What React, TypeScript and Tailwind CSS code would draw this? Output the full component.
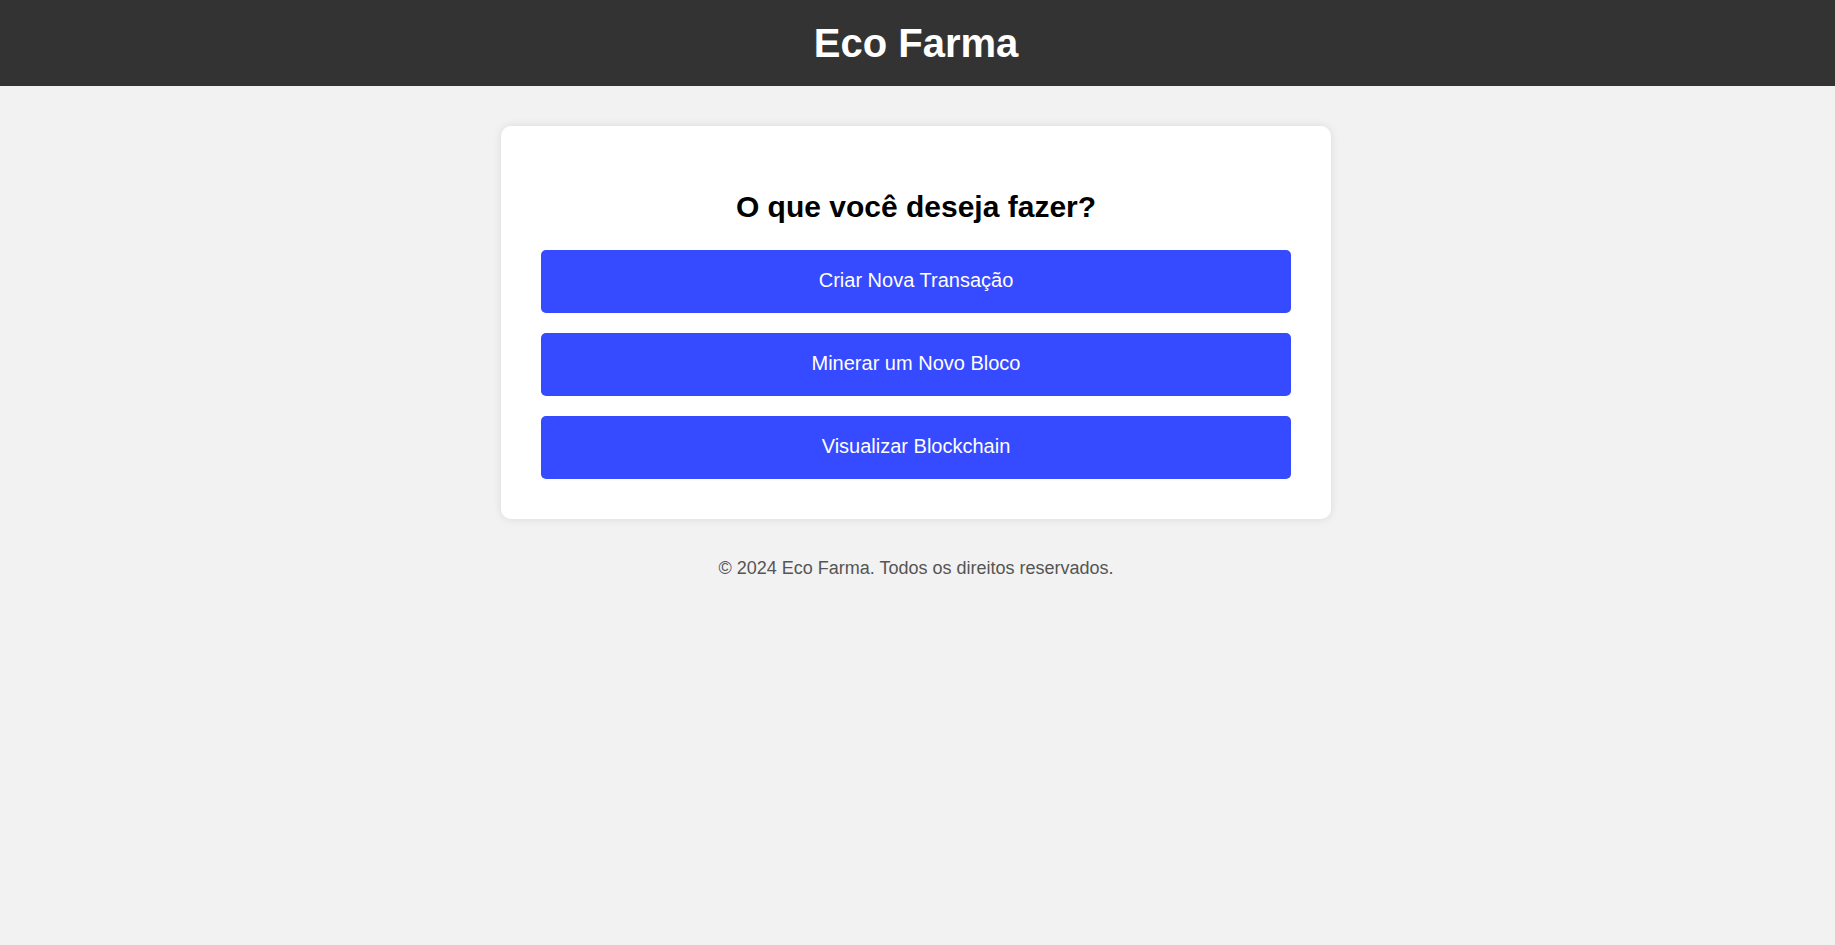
export default function App() {
  const buttons = ["Criar Nova Transação", "Minerar um Novo Bloco", "Visualizar Blockchain"];
  return (
    <div className="min-h-[945px] bg-[#f2f2f2] font-['Liberation_Sans',Arial,sans-serif]">
      <header className="bg-[#333333] py-[20px] pr-[3px] text-center">
        <h1 className="m-0 text-[40px] font-bold leading-[46px] text-white">Eco Farma</h1>
      </header>
      <div className="pr-[3px]">
        <main className="mx-auto mt-[40px] w-[830px] rounded-[10px] bg-white p-[40px] shadow-[0_0_10px_rgba(0,0,0,0.1)]">
          <h2 className="mb-[26px] mt-[24px] text-center text-[30px] font-bold leading-[34px] text-black">
            O que você deseja fazer?
          </h2>
          <div className="flex flex-col gap-[20px]">
            {buttons.map((b) => (
              <button
                key={b}
                className="h-[63px] w-full rounded-[5px] bg-[#364aff] pb-[2px] text-center text-[20px] leading-[23px] text-white"
              >
                {b}
              </button>
            ))}
          </div>
        </main>
        <footer className="pt-[39px] text-center text-[18px] leading-[21px] text-[#555555]">
          © 2024 Eco Farma. Todos os direitos reservados.
        </footer>
      </div>
    </div>
  );
}
